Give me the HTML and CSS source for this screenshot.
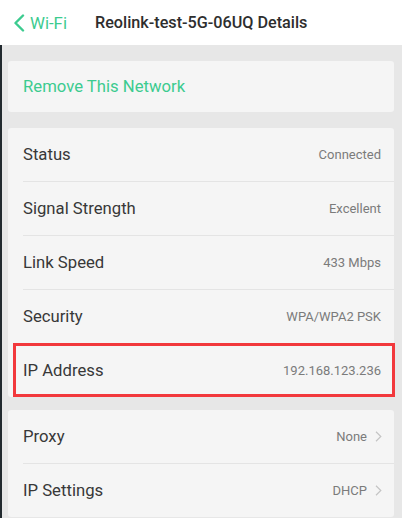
FILE: index.html
```
<!DOCTYPE html>
<html>
<head>
<meta charset="utf-8">
<link rel="stylesheet" href="styles.css">
</head>
<body>
<div class="page">
  <header class="topbar">
    <div class="back">
      <svg class="back-icon" width="12" height="18" viewBox="0 0 12 18"><polyline points="10,1.5 2.5,9 10,16.5" fill="none" stroke="#3ccb8f" stroke-width="2.4" stroke-linecap="round" stroke-linejoin="round"/></svg>
      <span class="back-text">Wi-Fi</span>
    </div>
    <div class="title">Reolink-test-5G-06UQ Details</div>
  </header>
  <main class="content">
    <section class="card">
      <div class="row action"><span class="action-text">Remove This Network</span></div>
    </section>
    <section class="card">
      <div class="row"><span class="label">Status</span><span class="value">Connected</span></div>
      <div class="row"><span class="label">Signal Strength</span><span class="value">Excellent</span></div>
      <div class="row"><span class="label">Link Speed</span><span class="value">433 Mbps</span></div>
      <div class="row"><span class="label">Security</span><span class="value">WPA/WPA2 PSK</span></div>
      <div class="row highlighted"><span class="label">IP Address</span><span class="value">192.168.123.236</span><span class="marker"></span></div>
    </section>
    <section class="card">
      <div class="row"><span class="label">Proxy</span><span class="value">None<svg class="chev" width="7" height="11" viewBox="0 0 7 11"><polyline points="1,0.8 5.8,5.5 1,10.2" fill="none" stroke="#c4c4c4" stroke-width="1.2"/></svg></span></div>
      <div class="row"><span class="label">IP Settings</span><span class="value">DHCP<svg class="chev" width="7" height="11" viewBox="0 0 7 11"><polyline points="1,0.8 5.8,5.5 1,10.2" fill="none" stroke="#c4c4c4" stroke-width="1.2"/></svg></span></div>
    </section>
  </main>
</div>
</body>
</html>
```
FILE: styles.css
```
html, body {
  margin: 0;
  padding: 0;
}
body {
  width: 402px;
  height: 518px;
  overflow: hidden;
  background: #e7e7e7;
  font-family: Roboto, "Liberation Sans", sans-serif;
}
.page {
  display: flex;
  flex-direction: column;
  height: 518px;
}
.topbar {
  height: 45px;
  background: #ffffff;
  display: flex;
  align-items: center;
  box-sizing: border-box;
  padding-left: 13px;
  flex-shrink: 0;
}
.back {
  display: flex;
  align-items: center;
  width: 82px;
}
.back-icon {
  display: block;
}
.back-text {
  color: #3ccb8f;
  font-size: 16.8px;
  margin-left: 5px;
}
.title {
  color: #2e2e2e;
  font-size: 16.2px;
  font-weight: 500;
}
.content {
  flex: 1;
  border-left: 2px solid #222a2f;
  padding: 16px 8px 0 6px;
  display: flex;
  flex-direction: column;
  gap: 16px;
}
.card {
  background: #f5f5f5;
  border-radius: 3px;
  display: flex;
  flex-direction: column;
}
.card + .card + .card {
  margin-top: -3px;
}
.row {
  position: relative;
  height: 53px;
  display: flex;
  align-items: center;
  justify-content: space-between;
  padding: 0 13px 0 15px;
}
.row + .row::before {
  content: "";
  position: absolute;
  top: -1px;
  left: 15px;
  right: 0;
  height: 1px;
  background: #e4e4e4;
}
.row + .row {
  margin-top: 1px;
}
.action {
  height: 51px;
}
.action-text {
  color: #3ccb8f;
  font-size: 16.7px;
}
.label {
  color: #383838;
  font-size: 16.7px;
}
.value {
  color: #7b7b7b;
  font-size: 13px;
  display: flex;
  align-items: center;
}
.chev {
  margin-left: 8px;
  margin-right: -1px;
}
.marker {
  position: absolute;
  left: 5px;
  right: -1px;
  top: -1px;
  bottom: 0;
  border: 3px solid #f2383c;
  pointer-events: none;
}
```
